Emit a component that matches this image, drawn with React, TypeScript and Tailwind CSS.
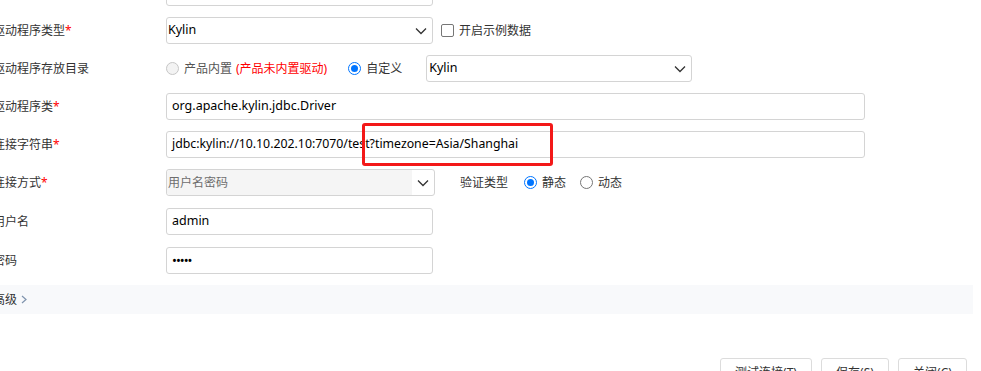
import React from "react";

const font = {
  fontFamily: '"Noto Sans", "Noto Sans CJK SC", sans-serif',
};

function Chevron() {
  return (
    <svg width="12" height="8" viewBox="0 0 12 8" className="shrink-0">
      <polyline points="1,1.5 6,6.5 11,1.5" fill="none" stroke="#333" strokeWidth="1.3" />
    </svg>
  );
}

function Label({ text, required }: { text: string; required?: boolean }) {
  return (
    <div className="flex w-[173px] shrink-0 items-center text-[12px] text-[#333]">
      {text}
      {required && <span className="text-[#f00]">*</span>}
    </div>
  );
}

function Radio({ checked, disabled }: { checked?: boolean; disabled?: boolean }) {
  if (checked) {
    return (
      <span className="flex h-[13px] w-[13px] shrink-0 items-center justify-center rounded-full border-[1.5px] border-[#0075ff] bg-white">
        <span className="h-[7px] w-[7px] rounded-full bg-[#0075ff]" />
      </span>
    );
  }
  return (
    <span
      className={
        disabled
          ? "block h-[13px] w-[13px] shrink-0 rounded-full border border-[#c6c6c6] bg-[#f3f3f3]"
          : "block h-[13px] w-[13px] shrink-0 rounded-full border border-[#767676] bg-white"
      }
    />
  );
}

export default function App() {
  return (
    <div className="relative h-[371px] w-[981px] overflow-hidden bg-white" style={font}>
      <div className="ml-[-7px] mt-[-21px] w-[980px]">
        <div className="flex flex-col gap-[11px]">
          {/* row cut off at the top */}
          <div className="flex h-[27px]">
            <Label text="数据源名称" required />
            <div className="h-[27px] w-[267px] rounded-[3px] border border-[#d4d4d4]" />
          </div>

          <div className="flex h-[27px] items-center">
            <Label text="驱动程序类型" required />
            <div className="flex h-[27px] w-[267px] items-center justify-between rounded-[3px] border border-[#d4d4d4] pl-[1px] pr-[5px] text-[12.5px] text-black">
              <span>Kylin</span>
              <Chevron />
            </div>
            <span className="ml-[8px] block h-[13px] w-[13px] rounded-[2px] border border-[#767676]" />
            <span className="ml-[5px] text-[12px] text-[#333]">开启示例数据</span>
          </div>

          <div className="flex h-[27px] items-center">
            <Label text="驱动程序存放目录" />
            <Radio disabled />
            <span className="ml-[5px] text-[12px] text-[#555]">产品内置</span>
            <span className="ml-[4px] text-[12px] text-[#f00]">(产品未内置驱动)</span>
            <span className="ml-[21px] flex">
              <Radio checked />
            </span>
            <span className="ml-[5px] text-[12px] text-[#333]">自定义</span>
            <div className="ml-[24px] flex h-[27px] w-[266px] items-center justify-between rounded-[3px] border border-[#d4d4d4] pl-[2px] pr-[5px] text-[12.5px] text-black">
              <span>Kylin</span>
              <Chevron />
            </div>
          </div>

          <div className="flex h-[27px] items-center">
            <Label text="驱动程序类" required />
            <div className="flex h-[27px] w-[699px] items-center rounded-[3px] border border-[#d4d4d4] px-[5px] text-[12.5px] text-black">
              org.apache.kylin.jdbc.Driver
            </div>
          </div>

          <div className="flex h-[27px] items-center">
            <Label text="连接字符串" required />
            <div className="flex h-[27px] w-[699px] items-center rounded-[3px] border border-[#d4d4d4] px-[5px] text-[12.3px] text-black">
              jdbc:kylin://10.10.202.10:7070/test?timezone=Asia/Shanghai
            </div>
          </div>

          <div className="flex h-[27px] items-center">
            <Label text="连接方式" required />
            <div className="flex h-[27px] w-[269px] items-center rounded-[3px] border border-[#d4d4d4] pr-[5px] text-[12px]">
              <div className="flex h-full flex-1 items-center rounded-l-[3px] bg-[#f5f5f5] pl-[1px] text-[#6d6d6d]">
                用户名密码
              </div>
              <span className="ml-[5px] flex">
                <Chevron />
              </span>
            </div>
            <span className="ml-[25px] text-[12px] text-[#333]">验证类型</span>
            <span className="ml-[16px] flex">
              <Radio checked />
            </span>
            <span className="ml-[5px] text-[12px] text-[#333]">静态</span>
            <span className="ml-[14px] flex">
              <Radio />
            </span>
            <span className="ml-[5px] text-[12px] text-[#333]">动态</span>
          </div>

          <div className="mt-[1px] flex h-[27px] items-center">
            <Label text="用户名" />
            <div className="flex h-[27px] w-[267px] items-center rounded-[3px] border border-[#d4d4d4] px-[5px] text-[12.5px] text-black">
              admin
            </div>
          </div>

          <div className="mt-[1px] flex h-[27px] items-center">
            <Label text="密码" />
            <div className="flex h-[27px] w-[267px] items-center rounded-[3px] border border-[#d4d4d4] px-[5px] text-[13px] tracking-[-1px] text-black">
              •••••
            </div>
          </div>
        </div>

        <div className="mt-[11px] flex h-[29px] w-[980px] items-center bg-[#f8f9fb] text-[12px] text-[#333]">
          <span>高级</span>
          <svg width="6" height="9" viewBox="0 0 6 9" className="ml-[4px]">
            <polyline points="1,1 5,4.5 1,8" fill="none" stroke="#7f93ad" strokeWidth="1.2" />
          </svg>
        </div>

        <div className="mt-[44px] flex justify-end gap-[9px] pr-[6px]">
          <button className="h-[30px] w-[92px] rounded-[3px] border border-[#dcdcdc] bg-white text-[12px] text-[#333]">
            测试连接(T)
          </button>
          <button className="h-[30px] w-[68px] rounded-[3px] border border-[#dcdcdc] bg-white text-[12px] text-[#333]">
            保存(S)
          </button>
          <button className="h-[30px] w-[69px] rounded-[3px] border border-[#dcdcdc] bg-white text-[12px] text-[#333]">
            关闭(C)
          </button>
        </div>
      </div>

      <div className="absolute left-[362px] top-[123px] h-[43px] w-[191px] rounded-[3px] border-[3px] border-[#f31818]" />
    </div>
  );
}
